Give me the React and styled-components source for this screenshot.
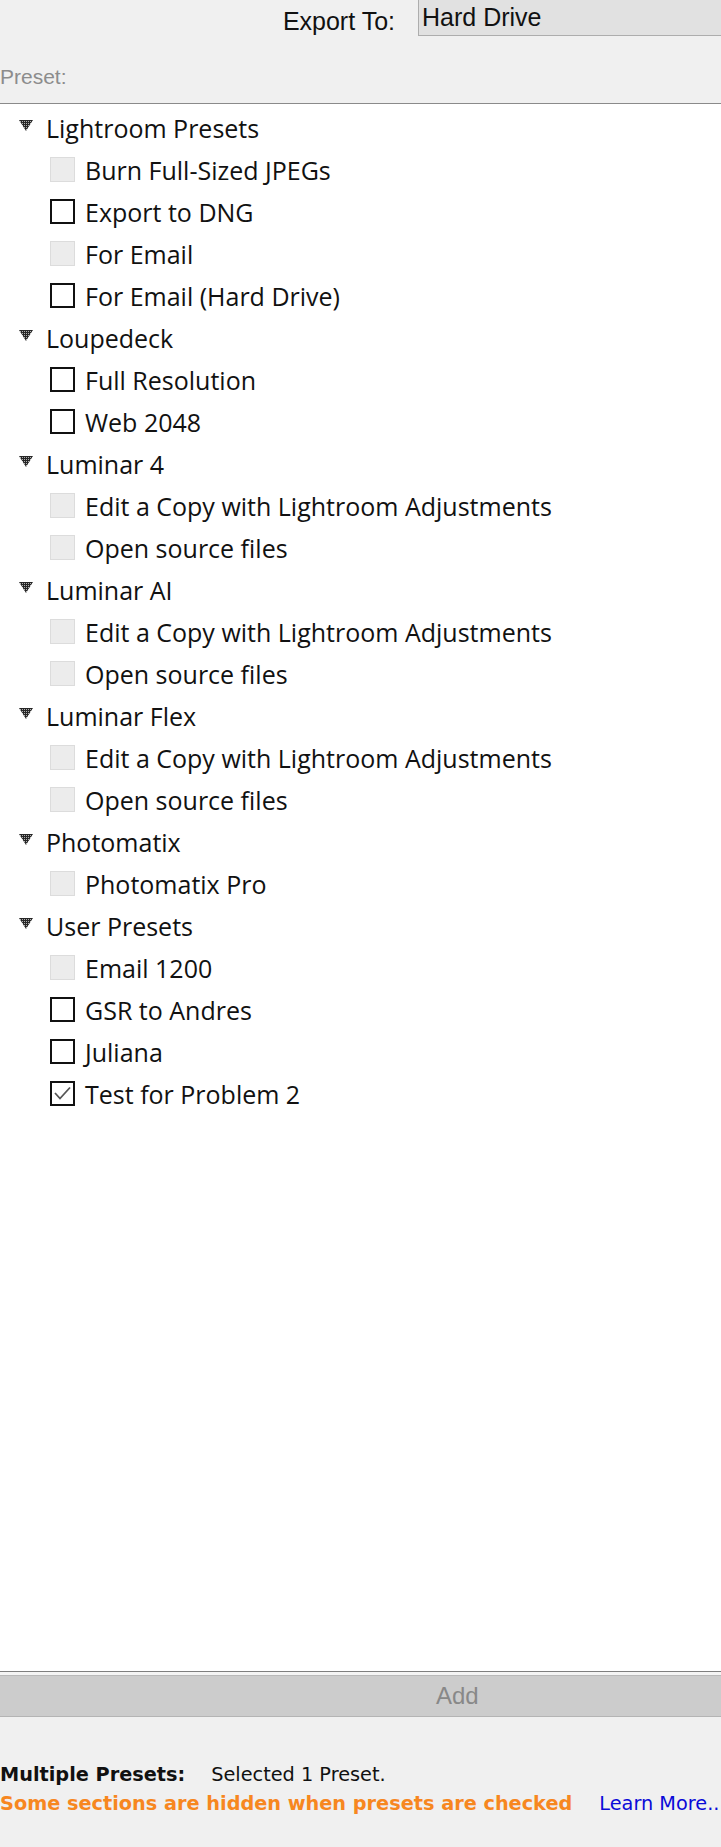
import React from "react";
import styled, { createGlobalStyle } from "styled-components";

const Global = createGlobalStyle`
  html, body { margin: 0; padding: 0; background: #f0f0f0; }
  #root { min-height: 100vh; }
  * { box-sizing: border-box; }
`;

const Page = styled.div`
  width: 721px;
  height: 1847px;
  display: flex;
  flex-direction: column;
  overflow: hidden;
  background: #f0f0f0;
  font-family: "Open Sans", "Liberation Sans", sans-serif;
  color: #111;
`;

const Header = styled.div`
  height: 104px;
  flex: none;
  display: flex;
  flex-direction: column;
  border-bottom: 1px solid #8a8a8a;
`;

const ExportRow = styled.div`
  display: flex;
  align-items: stretch;
  height: 36px;
`;

const ExportLabel = styled.div`
  width: 395px;
  text-align: right;
  font-family: "Liberation Sans", Arial, sans-serif;
  font-size: 25px;
  line-height: 36px;
  padding-top: 3px;
  color: #111;
`;

const Select = styled.div`
  flex: 1;
  margin-left: 23px;
  background: #e1e1e1;
  border-left: 1px solid #adadad;
  border-bottom: 1px solid #adadad;
  font-family: "Liberation Sans", Arial, sans-serif;
  font-size: 25px;
  line-height: 34px;
  padding-left: 3px;
  color: #111;
`;

const PresetLabel = styled.div`
  font-family: "Liberation Sans", Arial, sans-serif;
  font-size: 21px;
  color: #8c8c8c;
  padding-top: 29px;
  line-height: 24px;
`;

const List = styled.div`
  flex: none;
  height: 1567px;
  background: #ffffff;
  padding-top: 2px;
  display: flex;
  flex-direction: column;
`;

const Row = styled.div`
  height: 42px;
  flex: none;
  display: flex;
  align-items: center;
  padding-left: ${(p) => (p.$category ? "19px" : "50px")};
  gap: ${(p) => (p.$category ? "13px" : "10px")};
  white-space: nowrap;
`;

const Label = styled.span`
  font-size: 25px;
  line-height: 30px;
  padding-top: 2px;
  color: #111;
`;

const Box = styled.span`
  width: 25px;
  height: 25px;
  flex: none;
  display: inline-flex;
  align-items: center;
  justify-content: center;
  background: ${(p) => (p.$disabled ? "#ececec" : "#ffffff")};
  border: ${(p) => (p.$disabled ? "1px solid #dcdcdc" : "2px solid #111")};
`;

const Tri = styled.svg`
  flex: none;
  width: 14px;
  height: 11px;
  margin-top: -3px;
`;

const BottomRule = styled.div`
  height: 4px;
  flex: none;
  border-top: 1px solid #7f7f7f;
  background: #f4f4f4;
`;

const AddBar = styled.div`
  height: 42px;
  flex: none;
  background: #cccccc;
  border-top: 1px solid #b9b9b9;
  border-bottom: 1px solid #b4b4b4;
  padding-left: 436px;
  font-family: "Liberation Sans", Arial, sans-serif;
  font-size: 24px;
  line-height: 40px;
  color: #888888;
`;

const Footer = styled.div`
  flex: 1;
  padding-top: 43px;
  font-family: "DejaVu Sans", Verdana, sans-serif;
  font-size: 19.3px;
  line-height: 29px;
  white-space: nowrap;
`;

const FooterLine = styled.div`
  display: flex;
  gap: ${(p) => p.$gap || "26px"};
`;

const Strong = styled.span`
  font-weight: bold;
  color: ${(p) => p.$color || "#111"};
`;

const Plain = styled.span`
  color: ${(p) => p.$color || "#111"};
`;

const Triangle = () => (
  <Tri viewBox="0 0 14 11">
    <defs>
      <pattern id="dots" width="2" height="2" patternUnits="userSpaceOnUse">
        <rect width="2" height="2" fill="#262626" />
        <rect x="1" y="1" width="1" height="1" fill="#b0b0b0" />
      </pattern>
    </defs>
    <polygon points="0,0 14,0 7,11" fill="url(#dots)" />
  </Tri>
);

const Check = () => (
  <svg width="21" height="21" viewBox="0 0 21 21">
    <polyline points="3,10 8,15.5 18,4.5" fill="none" stroke="#555" strokeWidth="1.8" />
  </svg>
);

const data = [
  ["Lightroom Presets", [["Burn Full-Sized JPEGs", "d"], ["Export to DNG"], ["For Email", "d"], ["For Email (Hard Drive)"]]],
  ["Loupedeck", [["Full Resolution"], ["Web 2048"]]],
  ["Luminar 4", [["Edit a Copy with Lightroom Adjustments", "d"], ["Open source files", "d"]]],
  ["Luminar AI", [["Edit a Copy with Lightroom Adjustments", "d"], ["Open source files", "d"]]],
  ["Luminar Flex", [["Edit a Copy with Lightroom Adjustments", "d"], ["Open source files", "d"]]],
  ["Photomatix", [["Photomatix Pro", "d"]]],
  ["User Presets", [["Email 1200", "d"], ["GSR to Andres"], ["Juliana"], ["Test for Problem 2", "c"]]],
];

export default function App() {
  return (
    <Page>
      <Global />
      <Header>
        <ExportRow>
          <ExportLabel>Export To:</ExportLabel>
          <Select>Hard Drive</Select>
        </ExportRow>
        <PresetLabel>Preset:</PresetLabel>
      </Header>
      <List>
        {data.map(([cat, items]) => (
          <React.Fragment key={cat}>
            <Row $category>
              <Triangle />
              <Label>{cat}</Label>
            </Row>
            {items.map(([name, st], i) => (
              <Row key={cat + i}>
                <Box $disabled={st === "d"}>{st === "c" && <Check />}</Box>
                <Label>{name}</Label>
              </Row>
            ))}
          </React.Fragment>
        ))}
      </List>
      <BottomRule />
      <AddBar>Add</AddBar>
      <Footer>
        <FooterLine>
          <Strong>Multiple Presets:</Strong>
          <Plain>Selected 1 Preset.</Plain>
        </FooterLine>
        <FooterLine $gap="27px">
          <Strong $color="#f7871f">Some sections are hidden when presets are checked</Strong>
          <Plain $color="#0a0ad8">Learn More...</Plain>
        </FooterLine>
      </Footer>
    </Page>
  );
}
